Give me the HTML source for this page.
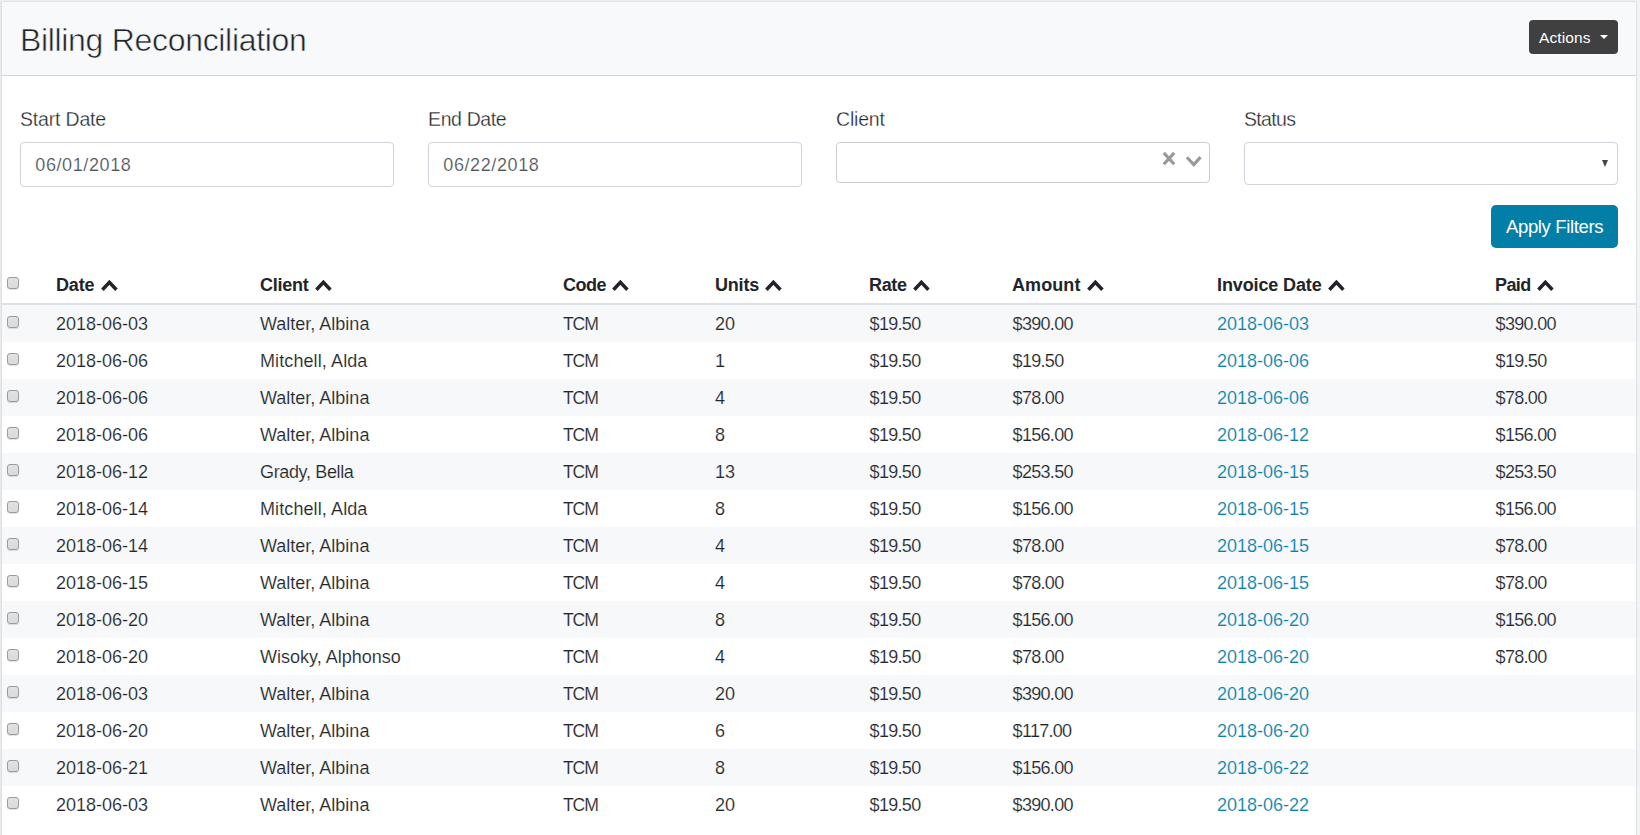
<!DOCTYPE html>
<html lang="en"><head><meta charset="utf-8"><title>Billing Reconciliation</title>
<style>
*{box-sizing:border-box;margin:0;padding:0}
html,body{width:1640px;height:835px;overflow:hidden}
body{background:#f2f3f5;font-family:"Liberation Sans",sans-serif;font-size:18px;color:#212529}
.card{position:absolute;left:1px;top:1px;width:1636px;height:900px;background:#fff;border:1px solid #dfe1e4;border-bottom:0;border-radius:3px 3px 0 0;overflow:hidden}
.card-header{position:absolute;left:0;top:0;width:1634px;height:74px;background:#f8f9fa;border-bottom:1px solid #d3d6da}
.title{position:absolute;left:17.9px;top:18px;height:40px;line-height:40px;font-size:32px;font-weight:400;letter-spacing:-0.31px;-webkit-text-stroke:0.55px #f8f9fa;white-space:nowrap;color:#212529}
.btn-actions{position:absolute;left:1527px;top:18px;width:89px;height:34px;background:#404040;border:0;border-radius:4px;color:#fff;font-family:inherit;font-size:15.5px;text-align:left}
.btn-actions span{position:absolute;left:10px;top:0;line-height:35px;letter-spacing:0.1px}
.caret{position:absolute;left:70.5px;top:15px;width:0;height:0;border-left:4.5px solid transparent;border-right:4.5px solid transparent;border-top:4px solid #fff}
.card-body{position:absolute;left:0;top:74px;width:1634px}
.filters{position:absolute;left:-2px;top:-76px}
.fg{position:absolute;top:0;width:374px}
.fg label{position:absolute;left:0;top:104px;height:30px;line-height:30px;font-size:19.5px;letter-spacing:-0.18px;white-space:nowrap;color:#212529;-webkit-text-stroke:0.3px #fff}
.inp{position:absolute;left:0;top:142px;width:374px;height:45px;border:1px solid #ced4da;border-radius:4px;background:#fff;color:#495057;font-size:18px}
.inp span{position:absolute;left:14.3px;top:0;line-height:44px;letter-spacing:0.6px;-webkit-text-stroke:0.2px #fff}
.vsel{position:absolute;left:0;top:142px;width:374px;height:41px;border:1px solid #ccc;border-radius:4px;background:#fff}
.vsel svg{position:absolute;left:325px;top:8px}
.sel{position:absolute;left:0;top:142px;width:374px;height:43px;border:1px solid #ced4da;border-radius:4px;background:#fff}
.tri{position:absolute;left:357px;top:17px;width:0;height:0;border-left:3.9px solid transparent;border-right:3.9px solid transparent;border-top:7px solid #40454b}
.btn-apply{position:absolute;left:1491px;top:205px;width:127px;height:43px;background:#037fa7;border:0;border-radius:5px;color:#fff;font-family:inherit;font-size:18.5px}
.btn-apply span{position:absolute;left:15px;top:0;line-height:44px;letter-spacing:-0.36px;white-space:nowrap}
.tbl{position:absolute;left:0;top:189px;width:1634px;table-layout:fixed;border-collapse:collapse;font-size:18px}
.tbl th{height:39px;line-height:37px;text-align:left;font-weight:700;border-bottom:2px solid #dee2e6;white-space:nowrap;vertical-align:top;position:relative;padding:0}
.tbl td{height:37px;line-height:37px;padding:0;white-space:nowrap;vertical-align:top;position:relative}
.tbl tbody tr:nth-child(odd){background:#f7f8fa}
.tbl a{color:#0681a8;text-decoration:none}
.chev{display:inline-block;margin-left:5.4px;vertical-align:-1px}
.cb{position:absolute;left:5px;top:11px;width:12px;height:12px;border:1px solid #9c9c9c;border-radius:3px;background:linear-gradient(#e2e2e2,#dadada);box-shadow:0 1px 1px rgba(0,0,0,.12)}
.tbl th .cb{top:12px}

.hDate{letter-spacing:-0.15px}.hClient{letter-spacing:-0.25px}.hCode{letter-spacing:-0.5px}.hUnits{letter-spacing:-0.2px}.hRate{letter-spacing:-0.35px}.hAmount{letter-spacing:0.08px}.hInv{letter-spacing:-0.12px}.hPaid{letter-spacing:-0.6px}
.n2{letter-spacing:0.1px}.n3{letter-spacing:-0.35px}.tcm{letter-spacing:-1.15px;font-size:17.6px}.mo{letter-spacing:-0.7px;margin-left:0.6px}

.tbl td span,.tbl td a{position:relative;top:1px}
.tbl th span{position:relative;top:2px}
.tbl th .chev{position:relative;top:2px}


.tbl td span,.tbl td a{-webkit-text-stroke:0.16px #fbfbfc}
.edge-l{position:absolute;left:0;top:0;width:1px;height:835px;background:#e8e9eb}
.edge-t{position:absolute;left:0;top:0;width:1640px;height:1px;background:#eceef0}

</style></head>
<body>
<div class="edge-l"></div><div class="edge-t"></div>
<div class="card">
<div class="card-header"><h2 class="title">Billing Reconciliation</h2><button class="btn-actions"><span>Actions</span><i class="caret"></i></button></div>
<div class="card-body">
<form class="filters">
<div class="fg" style="left:20px"><label>Start Date</label><div class="inp"><span>06/01/2018</span></div></div>
<div class="fg" style="left:428px"><label style="letter-spacing:-0.37px">End Date</label><div class="inp"><span>06/22/2018</span></div></div>
<div class="fg" style="left:836px"><label>Client</label><div class="vsel"><svg width="48" height="20" viewBox="0 0 48 20"><path d="M1.8,1.9 L12.2,13.3 M12.2,1.9 L1.8,13.3" stroke="#999" stroke-width="3.1" fill="none"/><polyline points="24.9,6.3 31.8,13.6 38.5,6.1" fill="none" stroke="#999" stroke-width="3.1"/></svg></div></div>
<div class="fg" style="left:1244px"><label style="letter-spacing:-0.65px">Status</label><div class="sel"><i class="tri"></i></div></div>
<button class="btn-apply" type="button"><span>Apply Filters</span></button>
</form>
<table class="tbl"><colgroup><col style="width:54px"><col style="width:204px"><col style="width:303px"><col style="width:152px"><col style="width:154px"><col style="width:143px"><col style="width:205px"><col style="width:278px"><col style="width:141px"></colgroup>
<thead><tr><th><i class="cb"></i></th><th><span class="hDate">Date</span><svg class="chev" width="19" height="13" viewBox="0 0 19 13"><polyline points="2.4,10.8 9.4,3.4 16.4,10.8" fill="none" stroke="#212529" stroke-width="3.5"/></svg></th><th><span class="hClient">Client</span><svg class="chev" width="19" height="13" viewBox="0 0 19 13"><polyline points="2.4,10.8 9.4,3.4 16.4,10.8" fill="none" stroke="#212529" stroke-width="3.5"/></svg></th><th><span class="hCode">Code</span><svg class="chev" width="19" height="13" viewBox="0 0 19 13"><polyline points="2.4,10.8 9.4,3.4 16.4,10.8" fill="none" stroke="#212529" stroke-width="3.5"/></svg></th><th><span class="hUnits">Units</span><svg class="chev" width="19" height="13" viewBox="0 0 19 13"><polyline points="2.4,10.8 9.4,3.4 16.4,10.8" fill="none" stroke="#212529" stroke-width="3.5"/></svg></th><th><span class="hRate">Rate</span><svg class="chev" width="19" height="13" viewBox="0 0 19 13"><polyline points="2.4,10.8 9.4,3.4 16.4,10.8" fill="none" stroke="#212529" stroke-width="3.5"/></svg></th><th><span class="hAmount">Amount</span><svg class="chev" width="19" height="13" viewBox="0 0 19 13"><polyline points="2.4,10.8 9.4,3.4 16.4,10.8" fill="none" stroke="#212529" stroke-width="3.5"/></svg></th><th><span class="hInv">Invoice Date</span><svg class="chev" width="19" height="13" viewBox="0 0 19 13"><polyline points="2.4,10.8 9.4,3.4 16.4,10.8" fill="none" stroke="#212529" stroke-width="3.5"/></svg></th><th><span class="hPaid">Paid</span><svg class="chev" width="19" height="13" viewBox="0 0 19 13"><polyline points="2.4,10.8 9.4,3.4 16.4,10.8" fill="none" stroke="#212529" stroke-width="3.5"/></svg></th></tr></thead>
<tbody>
<tr><td><i class="cb"></i></td><td><span class="dt">2018-06-03</span></td><td><span class="n1">Walter, Albina</span></td><td><span class="tcm">TCM</span></td><td><span class="un">20</span></td><td><span class="mo">$19.50</span></td><td><span class="mo">$390.00</span></td><td><a class="dt">2018-06-03</a></td><td><span class="mo">$390.00</span></td></tr>
<tr><td><i class="cb"></i></td><td><span class="dt">2018-06-06</span></td><td><span class="n2">Mitchell, Alda</span></td><td><span class="tcm">TCM</span></td><td><span class="un">1</span></td><td><span class="mo">$19.50</span></td><td><span class="mo">$19.50</span></td><td><a class="dt">2018-06-06</a></td><td><span class="mo">$19.50</span></td></tr>
<tr><td><i class="cb"></i></td><td><span class="dt">2018-06-06</span></td><td><span class="n1">Walter, Albina</span></td><td><span class="tcm">TCM</span></td><td><span class="un">4</span></td><td><span class="mo">$19.50</span></td><td><span class="mo">$78.00</span></td><td><a class="dt">2018-06-06</a></td><td><span class="mo">$78.00</span></td></tr>
<tr><td><i class="cb"></i></td><td><span class="dt">2018-06-06</span></td><td><span class="n1">Walter, Albina</span></td><td><span class="tcm">TCM</span></td><td><span class="un">8</span></td><td><span class="mo">$19.50</span></td><td><span class="mo">$156.00</span></td><td><a class="dt">2018-06-12</a></td><td><span class="mo">$156.00</span></td></tr>
<tr><td><i class="cb"></i></td><td><span class="dt">2018-06-12</span></td><td><span class="n3">Grady, Bella</span></td><td><span class="tcm">TCM</span></td><td><span class="un">13</span></td><td><span class="mo">$19.50</span></td><td><span class="mo">$253.50</span></td><td><a class="dt">2018-06-15</a></td><td><span class="mo">$253.50</span></td></tr>
<tr><td><i class="cb"></i></td><td><span class="dt">2018-06-14</span></td><td><span class="n2">Mitchell, Alda</span></td><td><span class="tcm">TCM</span></td><td><span class="un">8</span></td><td><span class="mo">$19.50</span></td><td><span class="mo">$156.00</span></td><td><a class="dt">2018-06-15</a></td><td><span class="mo">$156.00</span></td></tr>
<tr><td><i class="cb"></i></td><td><span class="dt">2018-06-14</span></td><td><span class="n1">Walter, Albina</span></td><td><span class="tcm">TCM</span></td><td><span class="un">4</span></td><td><span class="mo">$19.50</span></td><td><span class="mo">$78.00</span></td><td><a class="dt">2018-06-15</a></td><td><span class="mo">$78.00</span></td></tr>
<tr><td><i class="cb"></i></td><td><span class="dt">2018-06-15</span></td><td><span class="n1">Walter, Albina</span></td><td><span class="tcm">TCM</span></td><td><span class="un">4</span></td><td><span class="mo">$19.50</span></td><td><span class="mo">$78.00</span></td><td><a class="dt">2018-06-15</a></td><td><span class="mo">$78.00</span></td></tr>
<tr><td><i class="cb"></i></td><td><span class="dt">2018-06-20</span></td><td><span class="n1">Walter, Albina</span></td><td><span class="tcm">TCM</span></td><td><span class="un">8</span></td><td><span class="mo">$19.50</span></td><td><span class="mo">$156.00</span></td><td><a class="dt">2018-06-20</a></td><td><span class="mo">$156.00</span></td></tr>
<tr><td><i class="cb"></i></td><td><span class="dt">2018-06-20</span></td><td><span class="n4">Wisoky, Alphonso</span></td><td><span class="tcm">TCM</span></td><td><span class="un">4</span></td><td><span class="mo">$19.50</span></td><td><span class="mo">$78.00</span></td><td><a class="dt">2018-06-20</a></td><td><span class="mo">$78.00</span></td></tr>
<tr><td><i class="cb"></i></td><td><span class="dt">2018-06-03</span></td><td><span class="n1">Walter, Albina</span></td><td><span class="tcm">TCM</span></td><td><span class="un">20</span></td><td><span class="mo">$19.50</span></td><td><span class="mo">$390.00</span></td><td><a class="dt">2018-06-20</a></td><td><span class="mo"></span></td></tr>
<tr><td><i class="cb"></i></td><td><span class="dt">2018-06-20</span></td><td><span class="n1">Walter, Albina</span></td><td><span class="tcm">TCM</span></td><td><span class="un">6</span></td><td><span class="mo">$19.50</span></td><td><span class="mo">$117.00</span></td><td><a class="dt">2018-06-20</a></td><td><span class="mo"></span></td></tr>
<tr><td><i class="cb"></i></td><td><span class="dt">2018-06-21</span></td><td><span class="n1">Walter, Albina</span></td><td><span class="tcm">TCM</span></td><td><span class="un">8</span></td><td><span class="mo">$19.50</span></td><td><span class="mo">$156.00</span></td><td><a class="dt">2018-06-22</a></td><td><span class="mo"></span></td></tr>
<tr><td><i class="cb"></i></td><td><span class="dt">2018-06-03</span></td><td><span class="n1">Walter, Albina</span></td><td><span class="tcm">TCM</span></td><td><span class="un">20</span></td><td><span class="mo">$19.50</span></td><td><span class="mo">$390.00</span></td><td><a class="dt">2018-06-22</a></td><td><span class="mo"></span></td></tr>
</tbody></table>
</div>
</div>
</body></html>
